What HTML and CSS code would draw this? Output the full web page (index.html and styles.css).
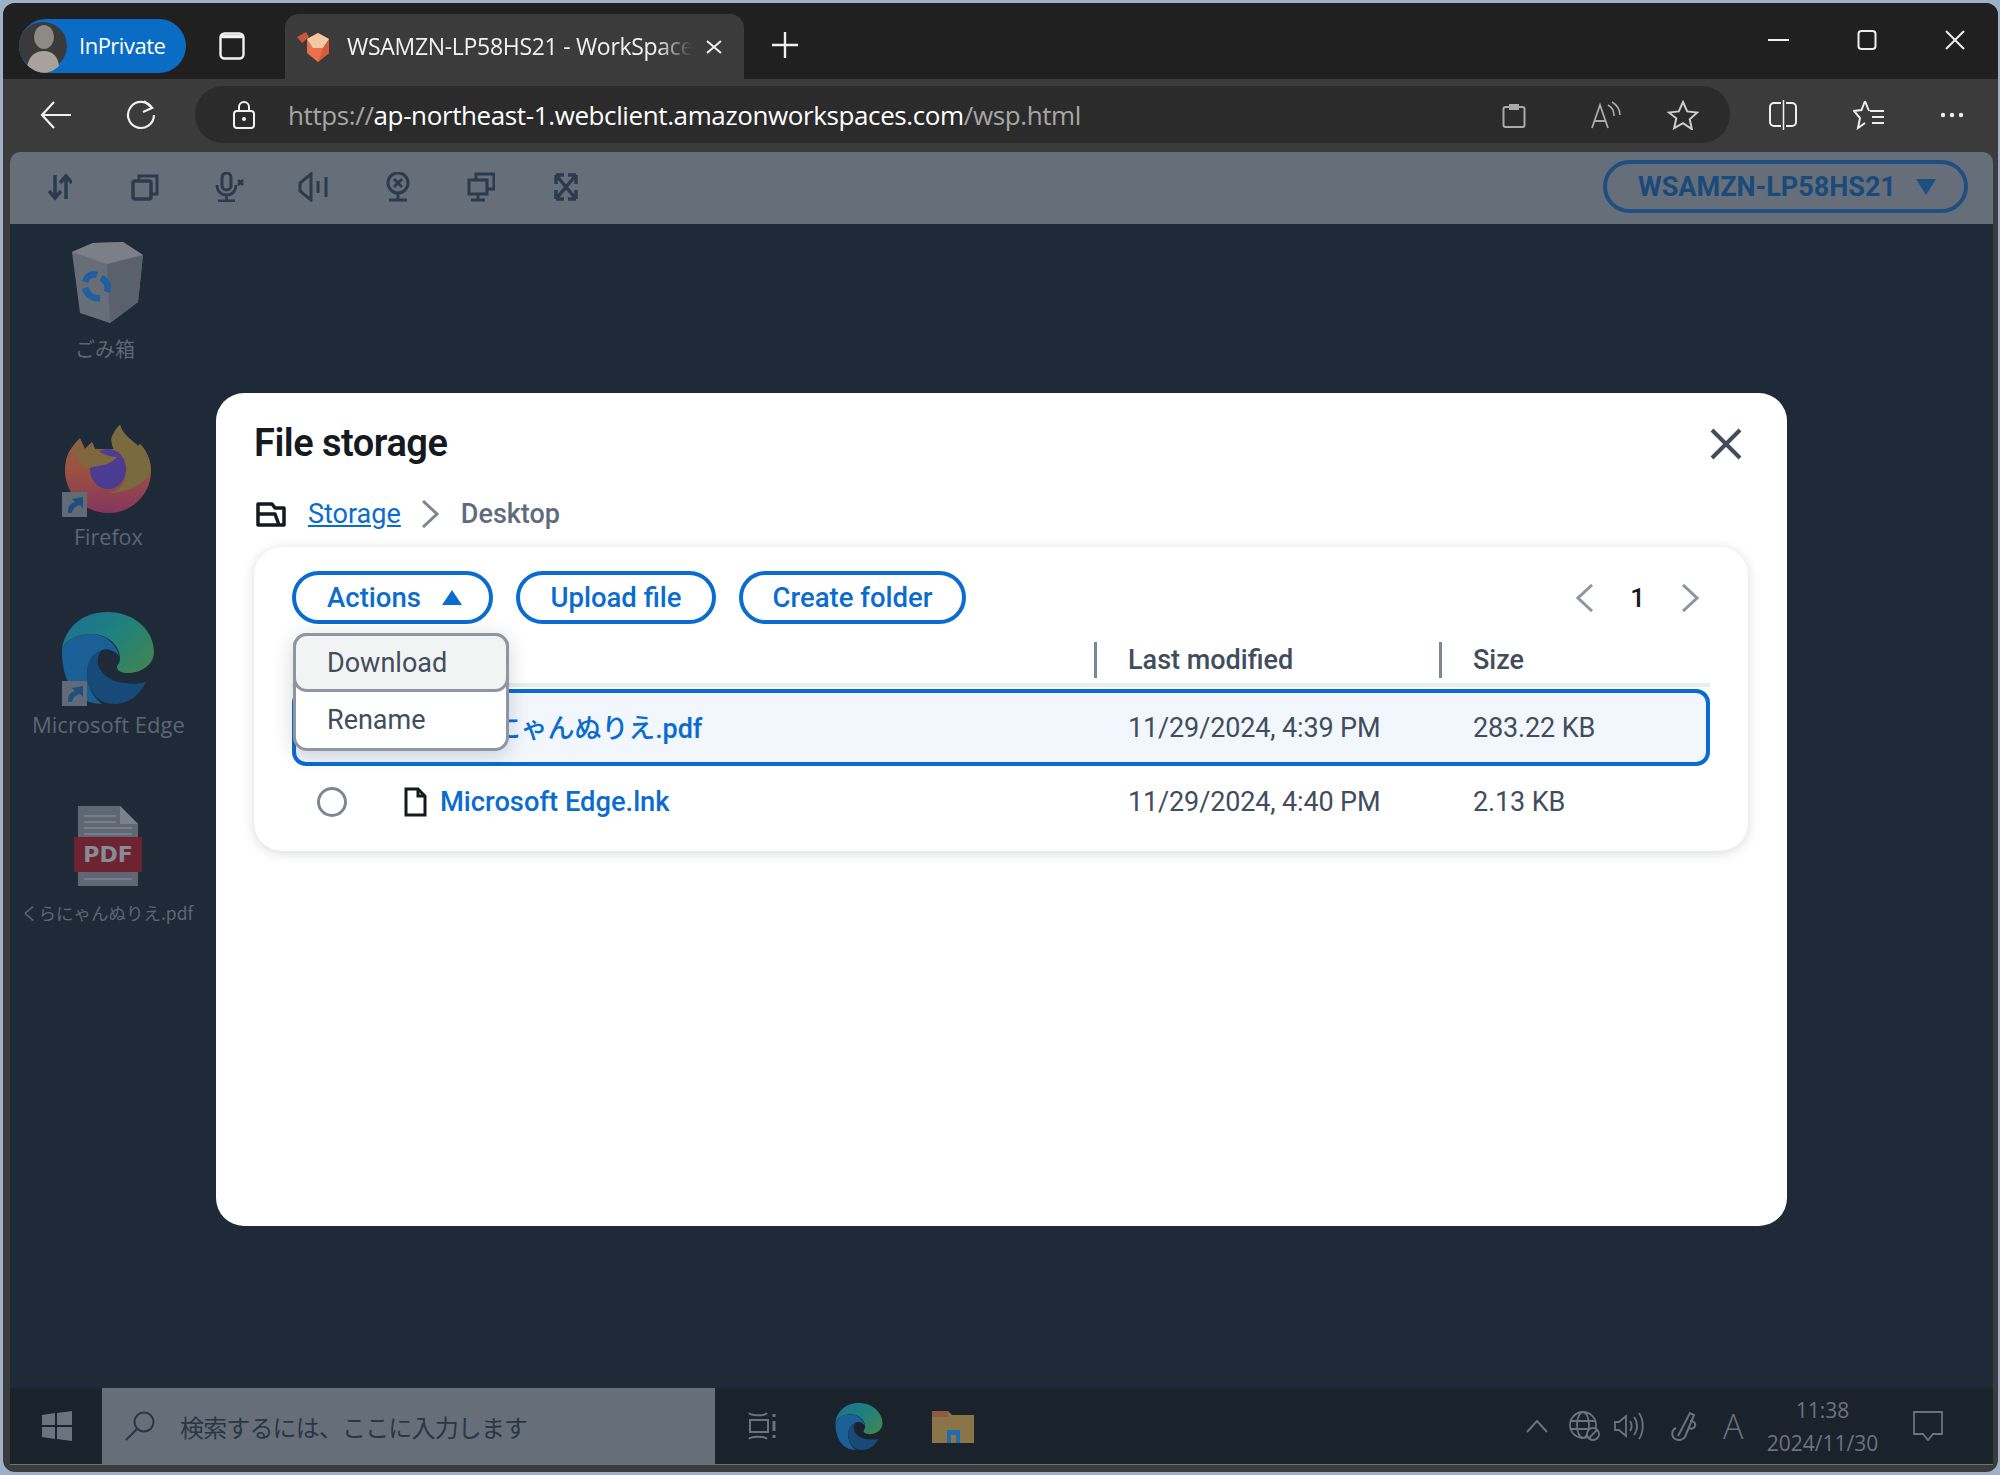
FILE: index.html
```html
<!DOCTYPE html>
<html lang="en">
<head>
<meta charset="utf-8">
<title>File storage</title>
<link rel="stylesheet" href="styles.css">
</head>
<body>
<svg class="defs" width="0" height="0" aria-hidden="true">
  <defs>
    <linearGradient id="edgeTop" x1="0" y1="0" x2="1" y2="0.6">
      <stop offset="0" stop-color="#1d6d94"/><stop offset="0.55" stop-color="#1e8080"/><stop offset="1" stop-color="#3a8458"/>
    </linearGradient>
    <linearGradient id="foxBody" x1="0" y1="0" x2="0" y2="1">
      <stop offset="0" stop-color="#7f6c3c"/><stop offset="0.5" stop-color="#9c5240"/><stop offset="1" stop-color="#84355e"/>
    </linearGradient>
    <symbol id="edge" viewBox="0 0 92 92">
      <path fill="url(#edgeTop)" d="M0 36C4 14 22 0 45 0c27 0 47 18 47 40 0 12-12 21-26 21-6 0-11-2-11-6 0-2 3-3 3-9C58 34 46 22 30 22 18 22 6 26 0 36z"/>
      <path fill="#1a5f96" d="M0 36C6 26 18 22 30 22c14 0 26 12 27 22-5-6-11-8-17-6-10 4-15 12-15 24 0 12 5 22 15 30C14 92-1 70 0 36z"/>
      <path fill="#174a78" d="M40 38C30 42 25 50 25 62c0 14 9 30 27 30 16 0 26-10 32-22-6 2-14 2-22 1-12-1-24-9-26-19-1-6 1-11 4-14z"/>
    </symbol>
    <symbol id="shortcut" viewBox="0 0 25 25">
      <rect width="25" height="25" fill="#626a78"/>
      <path fill="#1f4f80" d="M6 21c0-6 1-9 7-11l-3-3 11-2v11l-3-3c-4 1-7 3-8 8z"/>
    </symbol>
  </defs>
</svg>
<div class="window">
  <header class="titlebar">
    <div class="pill">
      <span class="avatar">
        <svg viewBox="0 0 48 54" width="48" height="54"><circle cx="24" cy="27" r="24" fill="#3a3a3a"/><ellipse cx="25" cy="18" rx="10" ry="12" fill="#8d8a85"/><path d="M8 48c2-12 9-16 17-16s14 5 15 15c-4 4-10 7-16 7s-12-2-16-6z" fill="#a7a29b"/></svg>
      </span>
      <span class="pill-label">InPrivate</span>
    </div>
    <svg class="tab-actions" viewBox="0 0 26 28" width="26" height="28"><rect x="1.5" y="1.5" width="23" height="25" rx="4" fill="none" stroke="#f2f2f2" stroke-width="2.4"/><path d="M1.500 4.500h23" stroke="#f2f2f2" stroke-width="3.500"/></svg>
    <div class="tab">
      <svg class="favicon" viewBox="-4 0 34 32" width="34" height="32"><path d="M-3 6L6 1l3 5-7 6z" fill="#c9573a"/><path d="M18 2l11 6v14l-11 9-11-9V8z" fill="#e8704e"/><path d="M18 2l11 6-6 9H13L7 8z" fill="#f3c9a5"/><path d="M29 8v14l-11 9 5-14z" fill="#d75a3a"/></svg>
      <span class="tab-title">WSAMZN-LP58HS21 - WorkSpace</span>
      <svg class="tab-close" viewBox="0 0 16 14" width="16" height="14"><path d="M1 1l14 12M15 1L1 13" stroke="#f0f0f0" stroke-width="2" fill="none"/></svg>
    </div>
    <svg class="new-tab" viewBox="0 0 26 26" width="26" height="26"><path d="M13 0v26M0 13h26" stroke="#f0f0f0" stroke-width="2.4"/></svg>
    <div class="win-controls">
      <svg viewBox="0 0 21 20" width="21" height="20"><path d="M0 10h21" stroke="#eee" stroke-width="2"/></svg>
      <svg viewBox="0 0 20 20" width="20" height="20"><rect x="1.5" y="1" width="17" height="18" rx="3" fill="none" stroke="#eee" stroke-width="2"/></svg>
      <svg viewBox="0 0 20 20" width="20" height="20"><path d="M1 1l18 18M19 1L1 19" stroke="#eee" stroke-width="2" fill="none"/></svg>
    </div>
  </header>

  <nav class="navbar">
    <svg class="nav-back" viewBox="0 0 32 28" width="32" height="28"><path d="M31 14H2M14 1L2 14l12 13" stroke="#f0f0f0" stroke-width="2.2" fill="none"/></svg>
    <svg class="nav-reload" viewBox="0 0 30 30" width="30" height="30"><path d="M26 8A13 13 0 1 0 28 15" stroke="#f0f0f0" stroke-width="2.2" fill="none"/><path d="M18 1l8 7-9 4" stroke="#f0f0f0" stroke-width="2.2" fill="none"/></svg>
    <div class="address">
      <svg class="lock" viewBox="0 0 22 28" width="22" height="28"><rect x="1" y="10" width="20" height="17" rx="3" fill="none" stroke="#f0f0f0" stroke-width="2"/><path d="M6 10V6a5 5 0 0 1 10 0v4" fill="none" stroke="#f0f0f0" stroke-width="2"/><circle cx="11" cy="18" r="2" fill="#f0f0f0"/></svg>
      <span class="url"><span class="url-dim">https://</span>ap-northeast-1.webclient.amazonworkspaces.com<span class="url-dim">/wsp.html</span></span>
      <div class="address-icons">
        <svg viewBox="0 0 24 26" width="24" height="26"><rect x="1.5" y="5" width="21" height="20" rx="2" fill="none" stroke="#aaa" stroke-width="2"/><path d="M7 2h10v6H7z" fill="#aaa"/></svg>
        <svg class="read" viewBox="0 0 30 28" width="30" height="28"><path d="M1 27L9 4l8 23M4 20h10" stroke="#aaa" stroke-width="1.8" fill="none"/><path d="M17 4c4 2 6 6 6 11M21 1c5 3 8 8 8 13" stroke="#aaa" stroke-width="1.6" fill="none"/></svg>
        <svg class="star" viewBox="0 0 32 30" width="32" height="30"><path d="M16 2l4.200 9.400 10 1.100-7.500 6.800 2.200 9.900L16 23.200 7.100 28.200l2.200-9.900L1.800 12.500l10-1.100z" fill="none" stroke="#ccc" stroke-width="2"/></svg>
      </div>
    </div>
    <div class="nav-icons">
      <svg viewBox="0 0 30 30" width="30" height="30"><path d="M13 3H6a4 4 0 0 0-4 4v15a4 4 0 0 0 4 4h7M18 3h6a4 4 0 0 1 4 4v15a4 4 0 0 1-4 4h-6" fill="none" stroke="#eee" stroke-width="2"/><path d="M15.500 0v30" stroke="#eee" stroke-width="1.500"/></svg>
      <svg viewBox="0 0 32 30" width="32" height="30"><path d="M12 1l3.500 9h-.5M12 1L8.500 10 1 11l6 7-2 10 7-5" fill="none" stroke="#eee" stroke-width="2"/><path d="M17 11h14M19 17h12M19 23h12" stroke="#eee" stroke-width="2"/></svg>
      <svg viewBox="0 0 24 6" width="24" height="6"><circle cx="3" cy="3" r="2.200" fill="#eee"/><circle cx="12" cy="3" r="2.200" fill="#eee"/><circle cx="21" cy="3" r="2.200" fill="#eee"/></svg>
    </div>
  </nav>

  <div class="stage">
    <div class="ws-toolbar">
      <div class="ws-icons">
        <svg viewBox="0 0 24 28" width="24" height="28"><path d="M7 2v22M1 18l6 7 6-7M18 26V4M12 10l6-7 6 7" stroke="#2b3b4d" stroke-width="3.500" fill="none"/></svg>
        <svg viewBox="0 0 28 28" width="28" height="28"><rect x="2" y="8" width="18" height="18" rx="2" fill="none" stroke="#2b3b4d" stroke-width="3.500"/><path d="M8 8V3h18v18h-6" fill="none" stroke="#2b3b4d" stroke-width="3"/></svg>
        <svg viewBox="0 0 30 30" width="30" height="30"><rect x="8" y="1" width="9" height="17" rx="4.500" fill="none" stroke="#2b3b4d" stroke-width="3"/><path d="M3 13c0 6 4 10 9.500 10S22 19 22 13M12.500 23v5M4 29h17M24 8l5 5M29 8l-5 5" fill="none" stroke="#2b3b4d" stroke-width="2.800"/></svg>
        <svg viewBox="0 0 30 30" width="30" height="30"><path d="M2 11v8l11 9V2z" fill="none" stroke="#2b3b4d" stroke-width="3"/><path d="M20 9v12M28 5v20" stroke="#2b3b4d" stroke-width="3"/></svg>
        <svg viewBox="0 0 24 30" width="24" height="30"><circle cx="12" cy="11" r="10" fill="none" stroke="#2b3b4d" stroke-width="3"/><path d="M8 7l8 8M16 7l-8 8M12 21v6M3 28h18" fill="none" stroke="#2b3b4d" stroke-width="2.800"/></svg>
        <svg viewBox="0 0 28 30" width="28" height="30"><path d="M9 7V2h18v15h-7" fill="none" stroke="#2b3b4d" stroke-width="3"/><rect x="2" y="8" width="18" height="14" fill="none" stroke="#2b3b4d" stroke-width="3"/><path d="M11 22v6M4 28h14" stroke="#2b3b4d" stroke-width="3"/></svg>
        <svg viewBox="0 0 26 30" width="26" height="30"><path d="M3 3l20 24M23 3L3 27M3 3h8M3 3v9M23 3h-8M23 3v9M3 27h8M3 27v-9M23 27h-8M23 27v-9" fill="none" stroke="#2b3b4d" stroke-width="3.500"/></svg>
      </div>
      <div class="session">
        <span class="session-name">WSAMZN-LP58HS21</span>
        <svg viewBox="0 0 20 16" width="20" height="16"><path d="M0 0h20L10 16z" fill="#1d4f80"/></svg>
      </div>
    </div>

    <main class="desktop">
      <div class="desk-icon di-recycle">
        <svg viewBox="0 0 73 84" width="73" height="84"><path d="M1 12L22 3l30-1 20 13-5 47-28 21-30-10z" fill="#686e77"/><path d="M36 24l36-9-5 47-28 21z" fill="#5a616c"/><path d="M1 12L22 3l30-1 20 13-36 9z" fill="#7b8088"/><path d="M14 42c2-6 6-9 12-7M30 38c6 3 8 8 6 14M29 58c-7 1-13-3-15-10" fill="none" stroke="#1f5f9f" stroke-width="6.500"/></svg>
        <span class="desk-label lb-recycle">ごみ箱</span>
      </div>
      <div class="desk-icon di-firefox">
        <svg viewBox="0 0 86 88" width="86" height="88"><path d="M0 45c0-15 6-23 15-32l5 11 7-7 3 7h20l-4-10c2-6 6-11 9-14 3 10 11 14 18 21l2-2c7 7 11 17 11 27 0 24-20 42-42 42C20 88 0 70 0 45z" fill="url(#foxBody)"/><path d="M55 0c-9 8-11 18-5 26 10 6 14 16 10 28-2 8-8 12-16 14 16 0 36-8 42-22 0-10-4-20-11-27l-2 2C66 14 58 10 55 0z" fill="#7a6a3e"/><ellipse cx="43" cy="44" rx="18" ry="20" fill="#4a3c92"/><path d="M11 26l9-2 7-7 3 7c6 4 14 8 22 8-8 10-22 8-30 12-6-4-10-10-11-18z" fill="#80683e"/></svg>
        <svg class="badge badge-firefox" width="25" height="25"><use href="#shortcut"/></svg>
        <span class="desk-label lb-firefox">Firefox</span>
      </div>
      <div class="desk-icon di-edge">
        <svg width="92" height="92"><use href="#edge"/></svg>
        <svg class="badge badge-edge" width="25" height="25"><use href="#shortcut"/></svg>
        <span class="desk-label lb-edge">Microsoft Edge</span>
      </div>
      <div class="desk-icon di-pdf">
        <svg viewBox="0 0 68 80" width="68" height="80"><path d="M4 0h42l18 18v62H4z" fill="#5f6772"/><path d="M46 0l18 18H46z" fill="#7a818c"/><path d="M10 10h32M10 16h32M10 22h48M10 28h48M10 73h48" stroke="#7f8691" stroke-width="1.500"/><rect x="0" y="31" width="68" height="35" fill="#6e2430"/><text class="pdf-mark" x="34" y="56" text-anchor="middle">PDF</text></svg>
        <span class="desk-label lb-pdf">くらにゃんぬりえ.pdf</span>
      </div>

      <section class="modal">
        <div class="modal-head">
          <h1 class="modal-title">File storage</h1>
          <svg class="modal-close" viewBox="0 0 32 32" width="32" height="32"><path d="M2 2l28 28M30 2L2 30" stroke="#414d5c" stroke-width="4" fill="none"/></svg>
        </div>
        <div class="crumbs">
          <svg class="crumb-folder" viewBox="0 0 30 28" width="30" height="28"><path d="M2 25V4h14l3 4h9v17zM2 14h17l4 11" fill="none" stroke="#16191f" stroke-width="3.500" stroke-linejoin="round"/></svg>
          <a class="crumb-link">Storage</a>
          <svg class="crumb-sep" viewBox="0 0 18 28" width="18" height="28"><path d="M2 1l14 13L2 27" fill="none" stroke="#7d8794" stroke-width="3"/></svg>
          <span class="crumb-current">Desktop</span>
        </div>
        <div class="card">
          <div class="file-tools">
            <div class="actions-wrap">
              <button class="btn btn-actions">Actions
                <svg viewBox="0 0 20 15" width="20" height="15"><path d="M10 0l10 15H0z" fill="#0a6cd0"/></svg>
              </button>
              <div class="menu">
                <div class="menu-item is-hover">Download</div>
                <div class="menu-item">Rename</div>
              </div>
            </div>
            <button class="btn">Upload file</button>
            <button class="btn btn-create">Create folder</button>
            <div class="pager">
              <svg viewBox="0 0 18 28" width="18" height="28"><path d="M16 1L2 14l14 13" fill="none" stroke="#8d96a3" stroke-width="3"/></svg>
              <span class="page-no">1</span>
              <svg viewBox="0 0 18 28" width="18" height="28"><path d="M2 1l14 13L2 27" fill="none" stroke="#8d96a3" stroke-width="3"/></svg>
            </div>
          </div>
          <div class="table">
            <div class="thead">
              <div class="th"></div>
              <div class="th th-div">Last modified</div>
              <div class="th th-div">Size</div>
            </div>
            <div class="tr tr-selected">
              <div class="td td-name">
                <span class="radio"></span>
                <svg class="file-ico" viewBox="0 0 23 30" width="23" height="30"><path d="M2 2h12l7 7v19H2zM14 2v7h7" fill="none" stroke="#16191f" stroke-width="3"/></svg>
                <a class="file-link">くらにゃんぬりえ.pdf</a>
              </div>
              <div class="td">11/29/2024, 4:39 PM</div>
              <div class="td">283.22 KB</div>
            </div>
            <div class="tr">
              <div class="td td-name">
                <span class="radio"></span>
                <svg class="file-ico" viewBox="0 0 23 30" width="23" height="30"><path d="M2 2h12l7 7v19H2zM14 2v7h7" fill="none" stroke="#16191f" stroke-width="3"/></svg>
                <a class="file-link">Microsoft Edge.lnk</a>
              </div>
              <div class="td">11/29/2024, 4:40 PM</div>
              <div class="td">2.13 KB</div>
            </div>
          </div>
        </div>
      </section>
    </main>

    <footer class="taskbar">
      <svg class="start" viewBox="0 0 30 30" width="30" height="30"><path d="M0 4l13-2v12H0zM15 2l15-2v14H15zM0 16h13v12L0 26zM15 16h15v14l-15-2z" fill="#6b7380"/></svg>
      <div class="search">
        <svg viewBox="0 0 32 30" width="32" height="30"><circle cx="20" cy="11" r="9.500" fill="none" stroke="#2a3644" stroke-width="2"/><path d="M13 18L2 29" stroke="#2a3644" stroke-width="2.200"/></svg>
        <span class="search-text">検索するには、ここに入力します</span>
      </div>
      <svg class="taskview" viewBox="0 0 30 30" width="30" height="30"><path d="M2 2c2 3 16 3 18 0M2 28c2-3 16-3 18 0M3 9h18v12H3z" fill="none" stroke="#6b7380" stroke-width="2"/><path d="M27 3v3M27 10v10M27 24v3" stroke="#6b7380" stroke-width="3"/></svg>
      <svg class="task-edge" width="48" height="47"><use href="#edge"/></svg>
      <svg class="task-folder" viewBox="0 0 42 34" width="42" height="34"><path d="M0 2h16l4 4h22v28H0z" fill="#8a7448"/><path d="M0 2h16v6H0z" fill="#8d5c3e"/><path d="M15 34V21h13v13h-4v-8h-5v8z" fill="#1f6cad"/></svg>
      <div class="tray">
        <svg class="tray-caret" viewBox="0 0 22 13" width="22" height="13"><path d="M1 12L11 1l10 11" fill="none" stroke="#6b7380" stroke-width="2"/></svg>
        <svg class="tray-globe" viewBox="0 0 32 30" width="32" height="30"><circle cx="15" cy="14" r="13" fill="none" stroke="#6b7380" stroke-width="1.800"/><ellipse cx="15" cy="14" rx="6" ry="13" fill="none" stroke="#6b7380" stroke-width="1.800"/><path d="M2 10h26M2 18h26" stroke="#6b7380" stroke-width="1.800"/><circle cx="25" cy="23" r="6" fill="#1a222c" stroke="#6b7380" stroke-width="1.800"/><path d="M21 27l8-8" stroke="#6b7380" stroke-width="1.800"/></svg>
        <svg class="tray-sound" viewBox="0 0 30 30" width="30" height="30"><path d="M1 11v8h4l7 6V5L5 11z" fill="none" stroke="#6b7380" stroke-width="1.800"/><path d="M16 10c2 3 2 7 0 10M20 6c4 5 4 13 0 18M25 2c5 7 5 19 0 26" fill="none" stroke="#6b7380" stroke-width="1.800"/></svg>
        <svg class="tray-pen" viewBox="0 0 30 30" width="30" height="30"><path d="M10 25L22 2l4 2-9 22c-3 4-9 4-12 0-2-4 0-8 3-9M22 10c4 0 6 2 5 5s-4 3-7 2" fill="none" stroke="#6b7380" stroke-width="2"/></svg>
        <span class="tray-ime">A</span>
        <div class="clock"><span>11:38</span><span>2024/11/30</span></div>
        <svg class="tray-notif" viewBox="0 0 30 30" width="30" height="30"><path d="M1 1h28v22H20l-5 6-5-6H1z" fill="none" stroke="#6b7380" stroke-width="1.800"/></svg>
      </div>
    </footer>
  </div>
</div>
</body>
</html>
```
FILE: styles.css
```css
* { box-sizing: border-box; }
html, body { margin: 0; padding: 0; }
body {
  width: 2000px;
  height: 1475px;
  overflow: hidden;
  background: #9fb0c8;
  font-family: "Open Sans", "Noto Sans CJK JP", sans-serif;
  padding: 3px 2px 3px 3px;
}
.defs { position: absolute; }
svg { display: block; flex: none; }

.window {
  height: 1469px;
  background: #3b3b3b;
  border-radius: 12px;
  overflow: hidden;
  display: flex;
  flex-direction: column;
}

/* title bar */
.titlebar {
  height: 76px;
  background: #202020;
  display: flex;
  padding-left: 16px;
  flex: none;
}
.pill {
  width: 167px;
  height: 54px;
  margin-top: 16px;
  border-radius: 27px;
  background: #0a6cc4;
  display: flex;
  align-items: center;
  overflow: hidden;
  color: #fff;
}
.pill-label { font-size: 22px; margin: 0 0 3px 12px; letter-spacing: -0.5px; }
.tab-actions { margin: 29px 0 0 33px; }
.tab {
  width: 459px;
  height: 65px;
  margin: 11px 0 0 40px;
  background: #3b3b3b;
  border-radius: 14px 14px 0 0;
  display: flex;
  align-items: center;
  padding: 0 22px 0 11px;
  color: #f2f2f2;
}
.tab-title {
  width: 345px;
  margin: 0 0 2px 17px;
  font-size: 23px;
  letter-spacing: -0.3px;
  white-space: nowrap;
  -webkit-mask-image: linear-gradient(90deg, #000 90%, transparent);
  mask-image: linear-gradient(90deg, #000 90%, transparent);
}
.tab-close { margin-left: 14px; }
.new-tab { margin: 29px 0 0 28px; }
.win-controls {
  margin: 27px 0 0 auto;
  padding-right: 33px;
  display: flex;
  align-items: flex-start;
  gap: 68px;
}

/* nav bar */
.navbar {
  height: 73px;
  flex: none;
  display: flex;
  align-items: center;
  padding: 0 0 2px 37px;
}
.nav-reload { margin-left: 54px; }
.address {
  width: 1535px;
  height: 57px;
  margin-left: 39px;
  border-radius: 28px;
  background: #2b2b2b;
  display: flex;
  align-items: center;
  padding-left: 38px;
}
.url { margin-left: 33px; font-size: 26px; color: #fff; letter-spacing: -0.39px; white-space: nowrap; }
.url-dim { color: #a6a6a6; }
.address-icons {
  margin-left: auto;
  display: flex;
  align-items: center;
  gap: 64px;
  padding-right: 31px;
}
.address-icons .read { margin-left: 1px; }
.address-icons .star { margin-left: -18px; }
.nav-icons {
  display: flex;
  align-items: center;
  gap: 55px;
  margin-left: 38px;
}

/* stage */
.stage {
  flex: 1;
  margin: 0 5px 0 7px;
  display: flex;
  flex-direction: column;
}
.ws-toolbar {
  height: 72px;
  flex: none;
  background: #666e7a;
  border-radius: 10px 10px 0 0;
  display: flex;
  align-items: center;
  padding: 0 25px 3px 38px;
}
.ws-icons {
  display: grid;
  grid-template-columns: 83px 83px 84px 88px 81px 86px 26px;
  align-items: center;
}
.session {
  margin-left: auto;
  width: 365px;
  height: 53px;
  padding-left: 3px;
  border: 4px solid #1f4f80;
  border-radius: 27px;
  display: flex;
  align-items: center;
  justify-content: center;
  gap: 20px;
  color: #1a4a7a;
}
.session-name { font: 700 27px "Roboto", sans-serif; }

/* desktop */
.desktop {
  flex: 1;
  position: relative;
  background: #1f2a38;
}
.desk-icon { position: absolute; }
.di-recycle { left: 61px; top: 16px; }
.di-firefox { left: 55px; top: 201px; }
.di-edge { left: 52px; top: 388px; }
.di-pdf { left: 64px; top: 582px; }
.badge { position: absolute; }
.badge-firefox { left: -3px; top: 67px; }
.badge-edge { left: 0; top: 69px; }
.desk-label {
  position: absolute;
  white-space: nowrap;
  color: #5c6675;
  font-size: 20px;
  line-height: 24px;
}
.lb-recycle { left: 4px; top: 97px; font-family: "Noto Sans CJK JP", sans-serif; }
.lb-firefox { left: 9px; top: 100px; font-size: 21.500px; }
.lb-edge { left: -30px; top: 100px; font-size: 22px; }
.lb-pdf { left: -53px; top: 95px; font-size: 17.500px; font-family: "Noto Sans CJK JP", sans-serif; }
.pdf-mark { font: 700 22px "DejaVu Sans", sans-serif; fill: #858d99; }

/* modal */
.modal {
  position: absolute;
  left: 206px;
  top: 169px;
  width: 1571px;
  height: 833px;
  background: #fff;
  border-radius: 28px;
  padding: 0 39px 0 38px;
  font-family: "Roboto", "Noto Sans CJK JP", sans-serif;
  color: #16191f;
}
.modal-head {
  height: 104px;
  display: flex;
  align-items: flex-start;
  justify-content: space-between;
}
.modal-title { margin: 27px 0 0; font-size: 38px; line-height: 46px; font-weight: 600; letter-spacing: -0.5px; }
.modal-close { margin: 35px 6px 0 0; }
.crumbs {
  height: 50px;
  display: flex;
  align-items: flex-start;
  font-size: 27px;
  line-height: 34px;
}
.crumb-folder { margin: 3px 0 0 2px; }
.crumb-link { margin-left: 22px; color: #0a6cd0; text-decoration: underline; }
.crumb-sep { margin: 3px 22px 0 20px; }
.crumb-current { color: #5f6b7a; font-weight: 500; }
.card {
  height: 304px;
  border-radius: 28px;
  background: #fff;
  box-shadow: 0 2px 12px rgba(40, 50, 60, 0.18);
  padding: 24px 38px 0;
}
.file-tools { height: 53px; display: flex; align-items: center; gap: 23px; }
.actions-wrap { position: relative; }
.btn {
  height: 53px;
  width: 200px;
  padding: 0;
  border: 4px solid #0a6cd0;
  border-radius: 27px;
  background: #fff;
  color: #0a6cd0;
  font: 500 27.500px "Roboto", sans-serif;
  display: flex;
  align-items: center;
  justify-content: center;
}
.btn-actions { width: 201px; padding-left: 4px; gap: 21px; }
.btn-create { width: 227px; }
.menu {
  position: absolute;
  left: 1px;
  top: 62px;
  width: 216px;
  height: 118px;
  z-index: 2;
  background: #fff;
  border: 3px solid #8f96a1;
  border-radius: 14px;
  box-shadow: 0 4px 20px rgba(40, 50, 60, 0.2);
  font-size: 27px;
  color: #414d5c;
}
.menu-item { height: 57px; line-height: 57px; padding-left: 31px; }
.menu-item.is-hover {
  height: 59px;
  margin: -3px -3px 0;
  padding-left: 31px;
  line-height: 55px;
  border: 3px solid #8f96a1;
  border-radius: 14px;
  background: #f2f3f3;
}
.pager { margin-left: auto; display: flex; align-items: center; gap: 36px; padding-right: 11px; }
.page-no { font-size: 26px; font-weight: 500; }
.thead, .tr { display: grid; grid-template-columns: 802px 345px 271px; }
.thead { height: 63px; border-bottom: 4px solid #eaeded; align-items: end; padding-bottom: 5px; }
.th { height: 36px; line-height: 36px; padding-left: 31px; font-size: 27px; font-weight: 500; color: #414d5c; }
.th-div { border-left: 3px solid #7d8794; }
.tr { height: 71px; align-items: center; font-size: 27px; letter-spacing: -0.14px; color: #414d5c; }
.tr-selected {
  height: 77px;
  margin-top: 2px;
  grid-template-columns: 798px 345px 267px;
  background: #f2f6fd;
  border: 4px solid #0a6cd0;
  border-radius: 14px;
}
.td { padding-left: 34px; white-space: nowrap; }
.td-name { padding-left: 25px; display: flex; align-items: center; }
.tr-selected .td-name { padding-left: 21px; }
.radio { width: 30px; height: 30px; border-radius: 50%; border: 3px solid #7d8794; background: #fff; }
.file-ico { margin-left: 57px; }
.file-link { margin-left: 13px; font-weight: 500; color: #0a6cd0; font-size: 27.300px; letter-spacing: 0; }
.tr-selected .file-link { margin-bottom: 3px; font-size: 27px; letter-spacing: -0.1px; }

/* taskbar */
.taskbar {
  height: 77px;
  flex: none;
  background: #1a222c;
  border-bottom: 1px solid #6b7380;
  margin-bottom: 7px;
  display: flex;
  align-items: center;
  color: #6b7380;
}
.start { margin-left: 32px; }
.search {
  width: 613px;
  height: 100%;
  margin-left: 30px;
  background: #666e7a;
  display: flex;
  align-items: center;
  padding-left: 22px;
}
.search-text { margin-left: 24px; font: 24px "Noto Sans CJK JP", sans-serif; letter-spacing: -0.85px; color: #2a3644; white-space: nowrap; }
.taskview { margin-left: 32px; }
.task-edge { margin-left: 58px; }
.task-folder { margin-left: 49px; }
.tray { margin-left: auto; display: flex; align-items: center; padding-right: 50px; }
.tray-globe { margin-left: 20px; }
.tray-sound { margin-left: 14px; }
.tray-pen { margin-left: 24px; }
.tray-ime { width: 24px; margin-left: 25px; font-size: 34px; line-height: 40px; font-weight: 300; }
.clock { width: 111px; margin-left: 20px; display: flex; flex-direction: column; align-items: center; gap: 11px; font-size: 21px; line-height: 22px; }
.tray-notif { margin-left: 35px; }
```
